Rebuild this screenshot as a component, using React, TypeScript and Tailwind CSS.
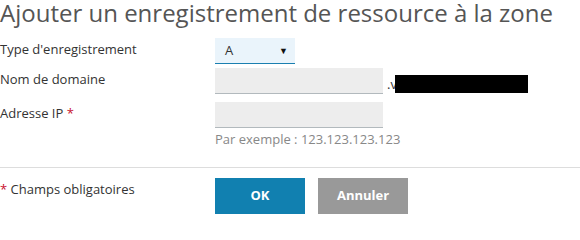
import React from "react";

export default function App() {
  return (
    <div
      className="w-[580px] h-[234px] bg-white text-[#333] overflow-hidden flex flex-col"
      style={{ fontFamily: '"Open Sans", sans-serif' }}
    >
      <h1 className="text-[24px] leading-[32px] -mt-[3px] text-[#555] font-normal whitespace-nowrap">
        Ajouter un enregistrement de ressource à la zone
      </h1>
      <div className="mt-[9px] grid grid-cols-[215px_1fr] text-[13px]">
        <div className="leading-[22px]">Type d'enregistrement</div>
        <div className="flex">
          <div className="w-[80px] h-[26px] bg-[#eaf4fb] border-b border-[#1a7fb0] flex items-center justify-between pl-[10px] pr-[7px]">
            <span>A</span>
            <span className="text-[9px] text-[#111]">▼</span>
          </div>
        </div>

        <div className="leading-[22px] mt-[4px]">Nom de domaine</div>
        <div className="flex items-end mt-[4px]">
          <div className="w-[168px] h-[26px] bg-[#ededed] border-b border-[#b2b9bd]" />
          <div className="flex items-center h-[26px] ml-[4px]">
            <span className="leading-[18px] mt-[6px]">.v</span>
            <div className="w-[133px] h-[18px] bg-black -ml-[2px] mt-[5px]" />
          </div>
        </div>

        <div className="leading-[22px] mt-[8px]">
          Adresse IP <span className="text-[#c8102e]">*</span>
        </div>
        <div className="mt-[8px]">
          <div className="w-[168px] h-[26px] bg-[#ededed] border-b border-[#b2b9bd]" />
          <div className="mt-[2px] leading-[18px] text-[#888]">
            Par exemple : 123.123.123.123
          </div>
        </div>
      </div>
      <div className="mt-[19px] border-t border-[#ddd]" />
      <div className="mt-[10px] grid grid-cols-[215px_1fr] text-[13px]">
        <div className="leading-[22px]">
          <span className="text-[#c8102e]">*</span> Champs obligatoires
        </div>
        <div className="flex gap-[13px]">
          <button className="w-[90px] h-[36px] bg-[#1180b0] text-white font-bold text-[13px]">
            OK
          </button>
          <button className="w-[90px] h-[36px] bg-[#999] text-white font-bold text-[13px]">
            Annuler
          </button>
        </div>
      </div>
    </div>
  );
}
